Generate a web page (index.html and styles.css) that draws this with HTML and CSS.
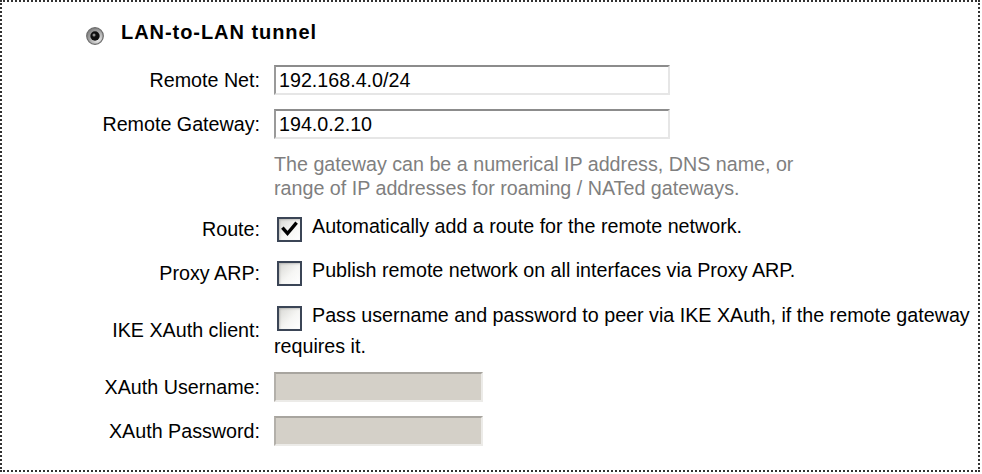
FILE: index.html
```html
<!DOCTYPE html>
<html>
<head>
<meta charset="utf-8">
<link rel="stylesheet" href="styles.css">
</head>
<body>
<div class="panel">
  <div class="title">
    <svg class="radio" width="18" height="18" viewBox="0 0 18 18">
      <defs>
        <radialGradient id="rg" cx="0.65" cy="0.7" r="0.75">
          <stop offset="0" stop-color="#f2f2f2"/>
          <stop offset="1" stop-color="#7a7a7a"/>
        </radialGradient>
      </defs>
      <circle cx="9" cy="9" r="8.3" fill="url(#rg)" stroke="#6c6c6c" stroke-width="1.2"/>
      <circle cx="9" cy="9" r="4.7" fill="#101010"/>
      <circle cx="8" cy="8" r="1.5" fill="#8e8e8e"/>
    </svg>
    <span class="title-text">LAN-to-LAN tunnel</span>
  </div>

  <div class="form">
    <div class="row">
      <div class="lbl">Remote Net:</div>
      <div class="val"><input class="field wide" type="text" value="192.168.4.0/24"></div>
    </div>
    <div class="row">
      <div class="lbl">Remote Gateway:</div>
      <div class="val"><input class="field wide" type="text" value="194.0.2.10"></div>
    </div>
    <div class="row hint-row">
      <div class="lbl"></div>
      <div class="hint">The gateway can be a numerical IP address, DNS name, or<br>range of IP addresses for roaming / NATed gateways.</div>
    </div>
    <div class="row">
      <div class="lbl">Route:</div>
      <div class="val"><span class="cb"><svg width="21" height="21" viewBox="0 0 21 21"><path d="M4.5 10 L8.5 14.5 L16.5 5" fill="none" stroke="#000" stroke-width="3.4" stroke-linecap="square"/></svg></span>Automatically add a route for the remote network.</div>
    </div>
    <div class="row">
      <div class="lbl">Proxy ARP:</div>
      <div class="val"><span class="cb"></span>Publish remote network on all interfaces via Proxy ARP.</div>
    </div>
    <div class="row ike-row">
      <div class="lbl">IKE XAuth client:</div>
      <div class="val"><span class="cb"></span>Pass username and password to peer via IKE XAuth, if the remote gateway requires it.</div>
    </div>
    <div class="row">
      <div class="lbl">XAuth Username:</div>
      <div class="val"><input class="field narrow" type="text" disabled></div>
    </div>
    <div class="row">
      <div class="lbl">XAuth Password:</div>
      <div class="val"><input class="field narrow" type="password" disabled></div>
    </div>
  </div>
</div>
</body>
</html>
```

FILE: styles.css
```css
* { box-sizing: border-box; }

html, body {
  margin: 0;
  padding: 0;
  background: #fff;
}

body {
  font-family: "Liberation Sans", Arial, sans-serif;
  font-size: 19.7px;
  line-height: 24px;
  color: #000;
}

.panel {
  width: 980px;
  height: 472px;
  border: 2px dotted #333;
  padding-top: 18px;
}

.title {
  display: flex;
  align-items: center;
  height: 24px;
  margin-left: 84px;
  margin-bottom: 14px;
}

.radio {
  flex: none;
  margin-top: 8px;
  margin-right: 17px;
}

.title-text {
  font-weight: bold;
  font-size: 20px;
  letter-spacing: 0.95px;
}

.row {
  display: grid;
  grid-template-columns: 258px 1fr;
  column-gap: 14px;
  align-items: center;
  height: 44px;
}

.lbl {
  text-align: right;
  white-space: nowrap;
}

.hint-row {
  height: 61px;
  align-items: start;
  padding-top: 6px;
}

.hint {
  color: #7f7f7f;
}

.ike-row {
  height: 70px;
}

.field {
  display: block;
  height: 30px;
  font-family: "Liberation Sans", Arial, sans-serif;
  font-size: 19.7px;
  color: #000;
  padding: 0 0 0 3px;
  margin: 0;
  background: #fff;
  border-style: solid;
  border-width: 2px;
  border-color: #8c8c8c #e6e6e6 #e6e6e6 #9a9a9a;
  outline: none;
}

.wide { width: 396px; }

.narrow {
  width: 209px;
  background: #d4d0c8;
  border-color: #a8a59f #ecebe8 #ecebe8 #b3b0aa;
}

.cb {
  display: inline-block;
  width: 25px;
  height: 25px;
  margin: 0 10px 3px 3px;
  vertical-align: -12px;
  border: 2px solid #3b4556;
  background: linear-gradient(135deg, #d8d8d4 0%, #f6f6f4 55%, #ffffff 100%);
  box-shadow: inset 1px 1px 2px rgba(0, 0, 0, 0.18);
}

.cb svg {
  display: block;
}
```
